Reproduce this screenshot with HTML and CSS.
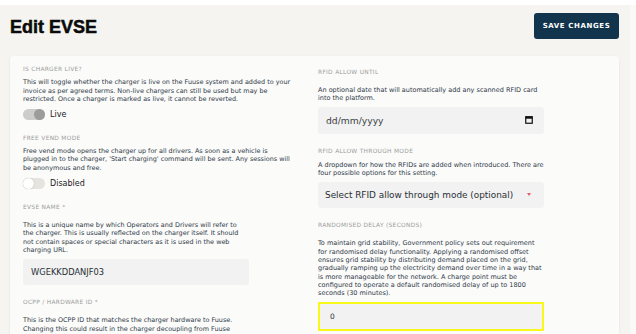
FILE: index.html
```html
<html>
    <head>
        <link rel="stylesheet" href="styles.css">
    </head>
    <body>
        <div class="topline"></div>
        <div class="frame">
            <div class="page">
                <div class="head">
                    <h1>Edit EVSE</h1>
                    <div class="save">SAVE CHANGES</div>
                </div>
                <div class="card">
                    <div class="col left">
                        <div class="field">
                            <div class="label">Is charger live?</div>
                            <p class="desc">This will toggle whether the charger is live on the Fuuse system and added to your invoice as per agreed terms. Non-live chargers can still be used but may be restricted. Once a charger is marked as live, it cannot be reverted.</p>
                            <div class="toggle-row">
                                <div class="switch on"><span class="knob"></span></div>
                                <span class="toggle-text">Live</span>
                            </div>
                        </div>
                        <div class="field">
                            <div class="label">Free vend mode</div>
                            <p class="desc">Free vend mode opens the charger up for all drivers. As soon as a vehicle is plugged in to the charger, 'Start charging' command will be sent. Any sessions will be anonymous and free.</p>
                            <div class="toggle-row">
                                <div class="switch"><span class="knob"></span></div>
                                <span class="toggle-text">Disabled</span>
                            </div>
                        </div>
                        <div class="field wide">
                            <div class="label">EVSE name *</div>
                            <p class="desc narrow">This is a unique name by which Operators and Drivers will refer to the charger. This is usually reflected on the charger itself. It should not contain spaces or special characters as it is used in the web charging URL.</p>
                            <div class="input">WGEKKDDANJF03</div>
                        </div>
                        <div class="field wide">
                            <div class="label">OCPP / Hardware ID *</div>
                            <p class="desc narrow">This is the OCPP ID that matches the charger hardware to Fuuse. Changing this could result in the charger decoupling from Fuuse and may require a site visit to resolve.</p>
                        </div>
                    </div>
                    <div class="col right">
                        <div class="field wide">
                            <div class="label">RFID allow until</div>
                            <p class="desc">An optional date that will automatically add any scanned RFID card into the platform.</p>
                            <div class="input date">
                                <span>dd/mm/yyyy</span>
                                <svg width="8" height="8" viewBox="0 0 8 8"><rect x="0.75" y="0.75" width="6.5" height="6.5" fill="none" stroke="#111" stroke-width="1.2"/><rect x="0.5" y="0.5" width="7" height="2.2" fill="#111"/></svg>
                            </div>
                        </div>
                        <div class="field">
                            <div class="label">RFID allow through mode</div>
                            <p class="desc full">A dropdown for how the RFIDs are added when introduced. There are four possible options for this setting.</p>
                            <div class="input select">
                                <span>Select RFID allow through mode (optional)</span>
                                <span class="caret"></span>
                            </div>
                        </div>
                        <div class="field wide">
                            <div class="label">Randomised delay (seconds)</div>
                            <p class="desc">To maintain grid stability, Government policy sets out requirement for randomised delay functionality. Applying a randomised offset ensures grid stability by distributing demand placed on the grid, gradually ramping up the electricity demand over time in a way that is more manageable for the network. A charge point must be configured to operate a default randomised delay of up to 1800 seconds (30 minutes).</p>
                            <div class="input focused">0</div>
                        </div>
                    </div>
                </div>
            </div>
            <div class="gutter"></div>
        </div>
    </body>
</html>
```

FILE: styles.css
```css
body{
    margin: 0;
    background: #f5f4f1;
    font-family: 'DejaVu Sans', sans-serif;
    color: #2f3a48;
    height: 334px;
    overflow: hidden;
}

.topline{
    height: 5px;
    background: #ffffff;
}

.frame{
    display: flex;
    height: 329px;
}

.page{
    flex-grow: 1;
    padding: 0 11px 0 10px;
    display: flex;
    flex-direction: column;
}

.gutter{
    width: 6px;
    background: #f9f9f8;
}

.head{
    display: flex;
    justify-content: space-between;
    align-items: flex-start;
    height: 51px;
    flex-shrink: 0;
}

h1{
    margin: 10px 0 0 0;
    font-family: 'Liberation Sans', Arial, sans-serif;
    font-size: 18px;
    line-height: 24px;
    font-weight: bold;
    color: #0b0b0b;
    -webkit-text-stroke: 0.5px #0b0b0b;
}

.save{
    margin-top: 8px;
    width: 85px;
    height: 26px;
    border-radius: 3px;
    background: #12344d;
    color: #ffffff;
    font-size: 7px;
    font-weight: bold;
    letter-spacing: 0.6px;
    display: flex;
    align-items: center;
    justify-content: center;
}

.card{
    flex-grow: 1;
    background: #fbfbfa;
    border-radius: 4px 4px 0 0;
    box-shadow: 0 1px 3px rgba(0,0,0,0.07);
    display: flex;
    padding: 9px 13px 0 13px;
    overflow: hidden;
}

.col.left{
    width: 268px;
    flex-shrink: 0;
}

.col.right{
    width: 228px;
    flex-shrink: 0;
    margin-left: 27px;
    padding-top: 2.5px;
}

.field{
    margin-bottom: 13.8px;
}

.label{
    font-size: 5.9px;
    line-height: 8px;
    text-transform: uppercase;
    letter-spacing: 0.3px;
    color: #9b9b9b;
    margin-bottom: 5.2px;
}

.field.wide .label{
    margin-bottom: 10px;
}

.desc{
    margin: 0;
    font-size: 6.45px;
    line-height: 8.33px;
    color: #2f3a48;
}

.right .desc{
    font-size: 6.5px;
    width: 225.2px;
}

.right .desc.full{
    width: 228px;
}

.desc.narrow{
    width: 220px;
}

.toggle-row{
    display: flex;
    align-items: center;
    height: 12px;
    margin-top: 5px;
}

.switch{
    width: 22px;
    height: 11px;
    border-radius: 6px;
    background: #e6e4df;
    display: flex;
    align-items: center;
    justify-content: flex-start;
}

.knob{
    width: 11px;
    height: 11px;
    border-radius: 50%;
    background: #ffffff;
    box-shadow: 0 0 1px rgba(0,0,0,0.35);
}

.switch.on{
    background: #cdcdcc;
    justify-content: flex-end;
}

.switch.on .knob{
    background: #9c9c9c;
    box-shadow: none;
}

.toggle-text{
    margin-left: 5px;
    font-size: 8px;
    color: #222;
}

.input{
    width: 226px;
    box-sizing: border-box;
    height: 26px;
    margin-top: 4.4px;
    background: #f1f2f1;
    border-radius: 3px;
    padding: 0 8px;
    display: flex;
    align-items: center;
    font-size: 8.3px;
    color: #2a2f36;
}

.input.date{
    height: 27px;
    justify-content: space-between;
    font-size: 9.2px;
    color: #3a3f45;
    padding-right: 11px;
}

.input.select{
    justify-content: space-between;
    padding: 0 13px 0 7px;
    font-size: 8.9px;
}

.caret{
    width: 0;
    height: 0;
    border-left: 2px solid transparent;
    border-right: 2px solid transparent;
    border-top: 3px solid #e35d6a;
}

.input.focused{
    height: 28.5px;
    border: 2px solid #f8f81a;
    border-radius: 0;
    padding-left: 10px;
    font-size: 7.4px;
}
```
